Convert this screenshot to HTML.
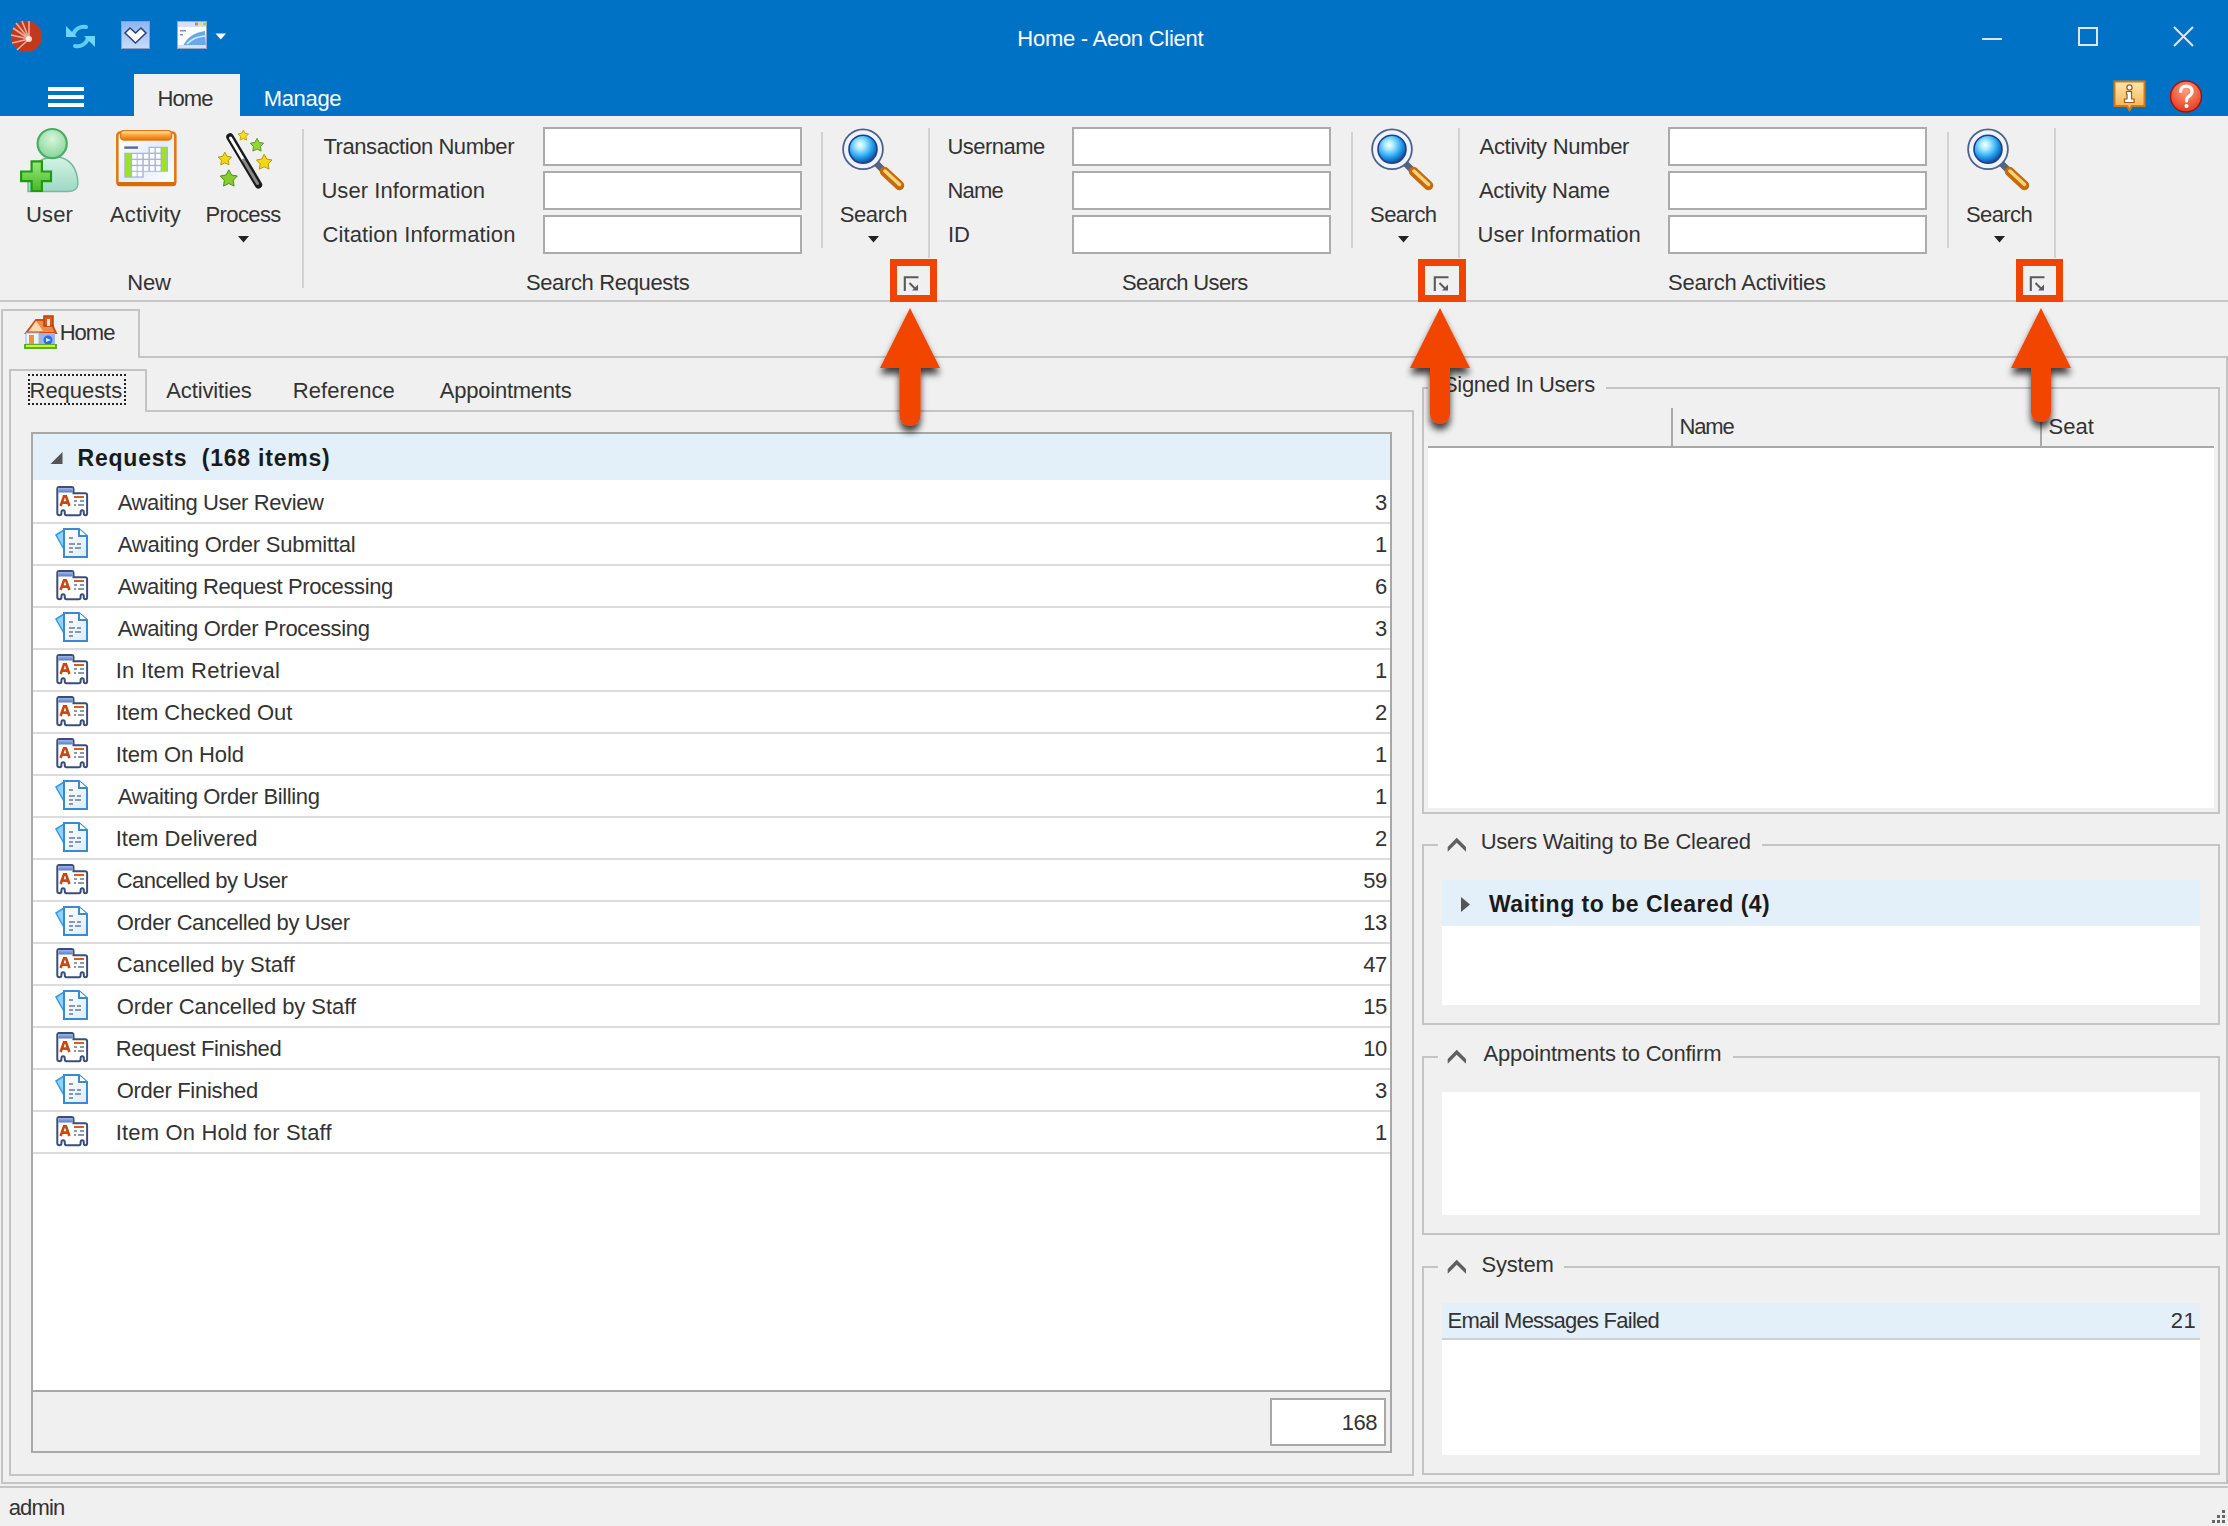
<!DOCTYPE html><html><head><meta charset="utf-8"><style>
html,body{margin:0;padding:0;}
body{width:2228px;height:1526px;position:relative;overflow:hidden;background:#f0f0f0;font-family:"Liberation Sans", sans-serif;}
.t{position:absolute;white-space:nowrap;line-height:26px;}
.r{position:absolute;}
</style></head><body>
<div class="r" style="left:0px;top:0px;width:2228px;height:116px;background:#0072c6;"></div>
<div class="t" style="left:1017.30px;top:26.0px;font-size:22px;color:#ffffff;font-weight:normal;letter-spacing:-0.259px;">Home - Aeon Client</div>
<svg class="r" style="left:10px;top:20px;" width="34" height="34" viewBox="0 0 34 34"><defs><radialGradient id="lg" cx="0.6" cy="0.55" r="0.6"><stop offset="0" stop-color="#f5a080"/><stop offset="1" stop-color="#c0381c"/></radialGradient></defs>
<circle cx="16.5" cy="16.5" r="15.5" fill="#c23a1e"/>
<g stroke="#f6c2b0" stroke-width="1.6" opacity="0.85">
<line x1="19" y1="19" x2="3" y2="8"/><line x1="19" y1="19" x2="6" y2="3"/><line x1="19" y1="19" x2="12" y2="1"/><line x1="19" y1="19" x2="19" y2="1"/><line x1="19" y1="19" x2="1" y2="15"/><line x1="19" y1="19" x2="2" y2="23"/><line x1="19" y1="19" x2="7" y2="30"/></g>
<circle cx="19" cy="19" r="3" fill="#ffffff" opacity="0.8"/></svg>
<svg class="r" style="left:64px;top:21px;" width="33" height="31" viewBox="0 0 33 31"><g fill="none" stroke="#5ecdf5" stroke-width="4" stroke-linecap="round">
<path d="M22 6 A11 11 0 0 0 9 14"/><path d="M11 25 A11 11 0 0 0 24 17"/></g>
<path d="M2 5 L2 16 L13 16 Z" fill="#6fd6f8"/><path d="M31 15 L31 26 L20 15 Z" fill="#6fd6f8"/></svg>
<svg class="r" style="left:121px;top:21px;" width="30" height="29" viewBox="0 0 30 29"><defs><linearGradient id="hb" x1="0" y1="0" x2="0" y2="1"><stop offset="0" stop-color="#8fb4f0"/><stop offset="1" stop-color="#c8dcfc"/></linearGradient></defs>
<rect x="0.5" y="0.5" width="28" height="27" fill="url(#hb)" stroke="#8aa0c8"/>
<path d="M4 12 L9 7 L14.5 12 L20 7 L25 12 L14.5 22 Z" fill="#ffffff" stroke="#28407a" stroke-width="1.5" stroke-linejoin="miter"/></svg>
<svg class="r" style="left:177px;top:21px;" width="31" height="29" viewBox="0 0 31 29"><rect x="0.5" y="0.5" width="29" height="27" fill="#ffffff" stroke="#9aa8c8"/>
<rect x="1" y="1" width="28" height="5" fill="#d8e0f4"/>
<rect x="18" y="1.5" width="3" height="3" fill="#f07070"/><rect x="22" y="1.5" width="3" height="3" fill="#f0e040"/><rect x="26" y="1.5" width="3" height="3" fill="#90e040"/>
<path d="M6 25 Q12 12 28 10 L29 25 Z" fill="#6aa8ec"/>
<path d="M10 23 Q16 16 28 15" stroke="#d8ecff" stroke-width="1.5" fill="none"/>
<rect x="3" y="9" width="6" height="1.5" fill="#8090b0"/><rect x="3" y="13" width="3" height="1.5" fill="#8090b0"/>
<rect x="1" y="24" width="28" height="3" fill="#d8e0f4"/></svg>
<svg class="r" style="left:215px;top:33px;" width="12" height="8" viewBox="0 0 12 8"><path d="M0.5 0.5 L11 0.5 L5.75 6.5 Z" fill="#ffffff"/></svg>
<div class="r" style="left:1982px;top:38px;width:20px;height:2px;background:#dfe6ee;"></div>
<div class="r" style="left:2078px;top:27px;width:16px;height:15px;border:2px solid #dfe6ee;background:transparent;"></div>
<svg class="r" style="left:2172px;top:25px;" width="24" height="23" viewBox="0 0 24 23"><path d="M2 2 L21 21 M21 2 L2 21" stroke="#dfe6ee" stroke-width="2"/></svg>
<div class="r" style="left:48px;top:87px;width:36px;height:4px;background:#ffffff;"></div>
<div class="r" style="left:48px;top:95px;width:36px;height:4px;background:#ffffff;"></div>
<div class="r" style="left:48px;top:103px;width:36px;height:4px;background:#ffffff;"></div>
<div class="r" style="left:134px;top:74px;width:106px;height:42px;background:#f0f0f0;"></div>
<div class="t" style="left:157.40px;top:86.0px;font-size:22px;color:#333333;font-weight:normal;letter-spacing:-0.9px;">Home</div>
<div class="t" style="left:263.70px;top:86.0px;font-size:22px;color:#ffffff;font-weight:normal;letter-spacing:-0.32px;">Manage</div>
<svg class="r" style="left:2113px;top:80px;" width="34" height="33" viewBox="0 0 34 33"><defs><linearGradient id="ig" x1="0" y1="0" x2="0" y2="1"><stop offset="0" stop-color="#ffe6b0"/><stop offset="1" stop-color="#f7b04a"/></linearGradient></defs>
<path d="M1.5 1.5 H31.5 V26 H19 L16.5 30 L14 26 H1.5 Z" fill="url(#ig)" stroke="#d27a16" stroke-width="2"/>
<circle cx="16.5" cy="7.5" r="2.6" fill="#fff" stroke="#9a5a18" stroke-width="1.2"/>
<path d="M13.5 11.5 H18.5 V19 H21 V22.5 H11.5 V19 H14 V14.5 H13.5 Z" fill="#fff" stroke="#9a5a18" stroke-width="1.2"/></svg>
<svg class="r" style="left:2169px;top:80px;" width="34" height="34" viewBox="0 0 34 34"><defs><radialGradient id="hg" cx="0.5" cy="0.3" r="0.7"><stop offset="0" stop-color="#ffa080"/><stop offset="1" stop-color="#e23a1a"/></radialGradient></defs>
<circle cx="17" cy="16.5" r="15.5" fill="url(#hg)" stroke="#a81010" stroke-width="1.5"/>
<path d="M11.5 11.5 Q12 6 17.5 6 Q23 6.5 23 11.5 Q23 14.5 19.5 16.5 Q17.5 18 17.5 21" fill="none" stroke="#fff" stroke-width="3.2" stroke-linecap="round"/>
<circle cx="17.5" cy="26" r="2" fill="#fff"/></svg>
<div class="r" style="left:0px;top:300px;width:2228px;height:2px;background:#c6c6c6;"></div>
<svg class="r" style="left:18px;top:126px;" width="62" height="68" viewBox="0 0 62 68"><defs><linearGradient id="ub" x1="0" y1="0" x2="0" y2="1"><stop offset="0" stop-color="#d4f4e4"/><stop offset="1" stop-color="#9ed8c4"/></linearGradient>
<radialGradient id="uh" cx="0.5" cy="0.35" r="0.65"><stop offset="0" stop-color="#d8f6dc"/><stop offset="1" stop-color="#86d49a"/></radialGradient>
<linearGradient id="up" x1="0" y1="0" x2="0" y2="1"><stop offset="0" stop-color="#98e878"/><stop offset="1" stop-color="#48b828"/></linearGradient></defs>
<path d="M10 65.5 Q8 32 38 30.5 Q59 33 60 58 Q59 65.5 50 65.5 Z" fill="url(#ub)" stroke="#78b8a4" stroke-width="1.5"/>
<circle cx="34.2" cy="17.6" r="14.6" fill="url(#uh)" stroke="#4aae62" stroke-width="2.2"/>
<path d="M13.6 35.4 H23.9 V45.5 H33 V55.2 H23.9 V65 H13.6 V55.2 H3.1 V45.5 H13.6 Z" fill="url(#up)" stroke="#1f9a14" stroke-width="2.2"/></svg>
<svg class="r" style="left:116px;top:130px;" width="61" height="57" viewBox="0 0 61 57"><defs><linearGradient id="cb" x1="0" y1="0" x2="1" y2="1"><stop offset="0" stop-color="#ffffff"/><stop offset="0.5" stop-color="#e4ecfc"/><stop offset="1" stop-color="#ffffff"/></linearGradient>
<linearGradient id="cbar" x1="0" y1="0" x2="0" y2="1"><stop offset="0" stop-color="#fff4e0"/><stop offset="0.4" stop-color="#ffb040"/><stop offset="1" stop-color="#e07010"/></linearGradient></defs>
<rect x="1.3" y="2.5" width="58" height="52.5" rx="3" fill="url(#cb)" stroke="#e07a12" stroke-width="2.6"/>
<rect x="1" y="52" width="59" height="4" rx="2" fill="#d86a08"/>
<rect x="4.5" y="0.5" width="51" height="9.5" rx="3.5" fill="url(#cbar)" stroke="#e07a12" stroke-width="1.5"/>
<path d="M8.3 22.7 H32.5 V16.7 H52 V41.7 H27.7 V47.8 H8.3 Z" fill="#a9b5d3"/>
<rect x="8.3" y="16.4" width="13.7" height="2.4" fill="#5a6a98"/>
<rect x="33.9" y="18.0" width="4.6" height="4.6" fill="#ffffff"/><rect x="39.9" y="18.0" width="4.6" height="4.6" fill="#ffffff"/><rect x="46.0" y="18.0" width="4.6" height="4.6" fill="#98ec00"/><rect x="10.0" y="24.0" width="4.6" height="4.6" fill="#98ec00"/><rect x="16.1" y="24.0" width="4.6" height="4.6" fill="#ffffff"/><rect x="21.7" y="24.0" width="4.6" height="4.6" fill="#ffffff"/><rect x="27.8" y="24.0" width="4.6" height="4.6" fill="#ffffff"/><rect x="33.9" y="24.0" width="4.6" height="4.6" fill="#ffffff"/><rect x="39.9" y="24.0" width="4.6" height="4.6" fill="#ffffff"/><rect x="46.0" y="24.0" width="4.6" height="4.6" fill="#98ec00"/><rect x="10.0" y="30.1" width="4.6" height="4.6" fill="#98ec00"/><rect x="16.1" y="30.1" width="4.6" height="4.6" fill="#ffffff"/><rect x="21.7" y="30.1" width="4.6" height="4.6" fill="#ffffff"/><rect x="27.8" y="30.1" width="4.6" height="4.6" fill="#ffffff"/><rect x="33.9" y="30.1" width="4.6" height="4.6" fill="#ffffff"/><rect x="39.9" y="30.1" width="4.6" height="4.6" fill="#ffffff"/><rect x="46.0" y="30.1" width="4.6" height="4.6" fill="#98ec00"/><rect x="10.0" y="36.2" width="4.6" height="4.6" fill="#98ec00"/><rect x="16.1" y="36.2" width="4.6" height="4.6" fill="#ffffff"/><rect x="21.7" y="36.2" width="4.6" height="4.6" fill="#ffffff"/><rect x="27.8" y="36.2" width="4.6" height="4.6" fill="#ffffff"/><rect x="33.9" y="36.2" width="4.6" height="4.6" fill="#ffffff"/><rect x="39.9" y="36.2" width="4.6" height="4.6" fill="#ffffff"/><rect x="46.0" y="36.2" width="4.6" height="4.6" fill="#98ec00"/><rect x="10.0" y="41.8" width="4.6" height="4.6" fill="#98ec00"/><rect x="16.1" y="41.8" width="4.6" height="4.6" fill="#ffffff"/><rect x="21.7" y="41.8" width="4.6" height="4.6" fill="#ffffff"/></svg>
<svg class="r" style="left:216px;top:126px;" width="60" height="68" viewBox="0 0 60 68"><polygon points="27.30,4.10 28.98,7.29 32.53,7.90 30.02,10.48 30.53,14.05 27.30,12.46 24.07,14.05 24.58,10.48 22.07,7.90 25.62,7.29" fill="#f4e020" stroke="#c8a800" stroke-width="1"/><polygon points="41.00,12.40 43.14,16.46 47.66,17.24 44.46,20.52 45.11,25.06 41.00,23.04 36.89,25.06 37.54,20.52 34.34,17.24 38.86,16.46" fill="#90d838" stroke="#5a9a20" stroke-width="1"/><polygon points="48.20,28.30 50.71,33.05 56.00,33.97 52.26,37.82 53.02,43.13 48.20,40.76 43.38,43.13 44.14,37.82 40.40,33.97 45.69,33.05" fill="#f0d818" stroke="#b89800" stroke-width="1"/><polygon points="8.90,26.20 11.04,30.26 15.56,31.04 12.36,34.32 13.01,38.86 8.90,36.84 4.79,38.86 5.44,34.32 2.24,31.04 6.76,30.26" fill="#f0d818" stroke="#b89800" stroke-width="1"/><polygon points="12.80,43.80 15.55,49.01 21.36,50.02 17.25,54.25 18.09,60.08 12.80,57.48 7.51,60.08 8.35,54.25 4.24,50.02 10.05,49.01" fill="#88cc30" stroke="#4a9018" stroke-width="1"/><path d="M14 11 L42.5 58.8" stroke="#1a1a1a" stroke-width="7.5" stroke-linecap="round"/><path d="M14.5 12 L27.5 34" stroke="#ffffff" stroke-width="3" stroke-linecap="round"/><path d="M27.5 34 L41.5 57.5" stroke="#888" stroke-width="3" stroke-linecap="round"/></svg>
<div class="t" style="left:26.00px;top:202.0px;font-size:22px;color:#333333;font-weight:normal;letter-spacing:0.167px;">User</div>
<div class="t" style="left:110.00px;top:202.0px;font-size:22px;color:#333333;font-weight:normal;letter-spacing:0.143px;">Activity</div>
<div class="t" style="left:205.50px;top:202.0px;font-size:22px;color:#333333;font-weight:normal;letter-spacing:-0.617px;">Process</div>
<svg class="r" style="left:238px;top:236px;" width="11" height="7" viewBox="0 0 11 7"><path d="M0 0 H11 L5.5 6.5 Z" fill="#222"/></svg>
<div class="t" style="left:127.30px;top:270.0px;font-size:22px;color:#333333;font-weight:normal;letter-spacing:-0.15px;">New</div>
<div class="r" style="left:302px;top:129px;width:2px;height:159px;background:#d2d2d2;"></div>
<div class="t" style="left:323.40px;top:134.0px;font-size:22px;color:#333333;font-weight:normal;letter-spacing:-0.435px;">Transaction Number</div>
<div class="t" style="left:321.40px;top:178.0px;font-size:22px;color:#333333;font-weight:normal;letter-spacing:0.073px;">User Information</div>
<div class="t" style="left:322.40px;top:222.0px;font-size:22px;color:#333333;font-weight:normal;letter-spacing:0.121px;">Citation Information</div>
<div class="r" style="left:543px;top:127px;width:255px;height:35px;border:2px solid #ababab;background:#ffffff;"></div>
<div class="r" style="left:543px;top:171px;width:255px;height:35px;border:2px solid #ababab;background:#ffffff;"></div>
<div class="r" style="left:543px;top:215px;width:255px;height:35px;border:2px solid #ababab;background:#ffffff;"></div>
<div class="r" style="left:821px;top:132px;width:2px;height:116px;background:#d2d2d2;"></div>
<svg class="r" style="left:842px;top:126px;" width="66" height="66" viewBox="0 0 66 66"><defs><radialGradient id="mg842" cx="0.4" cy="0.35" r="0.65"><stop offset="0" stop-color="#ffffff"/><stop offset="0.25" stop-color="#a8ecff"/><stop offset="0.7" stop-color="#1c9cec"/><stop offset="1" stop-color="#1a4a9a"/></radialGradient>
<linearGradient id="hd842" x1="0" y1="0" x2="1" y2="0"><stop offset="0" stop-color="#e07010"/><stop offset="0.6" stop-color="#ffe890"/><stop offset="1" stop-color="#e88a20"/></linearGradient></defs>
<line x1="34" y1="37" x2="44" y2="47" stroke="#56657e" stroke-width="6.5"/>
<line x1="42.5" y1="45.5" x2="57.5" y2="59.5" stroke="#c46a10" stroke-width="9.5" stroke-linecap="round"/>
<line x1="43" y1="45" x2="57.5" y2="58.5" stroke="#ffe080" stroke-width="3.5" stroke-linecap="round" opacity="0.9"/>
<circle cx="21" cy="23.2" r="19.9" fill="#eef3ff" stroke="#4e6088" stroke-width="1.8"/>
<circle cx="21" cy="23.2" r="14" fill="url(#mg842)" stroke="#1f3f8a" stroke-width="1.6"/></svg>
<div class="t" style="left:839.70px;top:202.0px;font-size:22px;color:#333333;font-weight:normal;letter-spacing:-0.4px;">Search</div>
<svg class="r" style="left:868px;top:236px;" width="11" height="7" viewBox="0 0 11 7"><path d="M0 0 H11 L5.5 6.5 Z" fill="#222"/></svg>
<div class="r" style="left:928px;top:128px;width:2px;height:130px;background:#d2d2d2;"></div>
<div class="t" style="left:525.90px;top:270.0px;font-size:22px;color:#333333;font-weight:normal;letter-spacing:-0.35px;">Search Requests</div>
<div class="r" style="left:890px;top:259px;width:33px;height:29px;border:7px solid #f04405;background:transparent;"></div>
<svg class="r" style="left:903px;top:275px;" width="17" height="17" viewBox="0 0 17 17"><path d="M1.8 16 V2.2 H15.5" fill="none" stroke="#5a5a5a" stroke-width="2.1"/><path d="M6.5 8 L12 13.5" fill="none" stroke="#5a5a5a" stroke-width="2"/><path d="M15 9.5 V15.5 H9 Z" fill="#5a5a5a"/></svg>
<div class="t" style="left:947.40px;top:134.0px;font-size:22px;color:#333333;font-weight:normal;letter-spacing:-0.529px;">Username</div>
<div class="t" style="left:947.60px;top:178.0px;font-size:22px;color:#333333;font-weight:normal;letter-spacing:-0.867px;">Name</div>
<div class="t" style="left:948.00px;top:222.0px;font-size:22px;color:#333333;font-weight:normal;letter-spacing:0px;">ID</div>
<div class="r" style="left:1072px;top:127px;width:255px;height:35px;border:2px solid #ababab;background:#ffffff;"></div>
<div class="r" style="left:1072px;top:171px;width:255px;height:35px;border:2px solid #ababab;background:#ffffff;"></div>
<div class="r" style="left:1072px;top:215px;width:255px;height:35px;border:2px solid #ababab;background:#ffffff;"></div>
<div class="r" style="left:1351px;top:132px;width:2px;height:116px;background:#d2d2d2;"></div>
<svg class="r" style="left:1371px;top:126px;" width="66" height="66" viewBox="0 0 66 66"><defs><radialGradient id="mg1371" cx="0.4" cy="0.35" r="0.65"><stop offset="0" stop-color="#ffffff"/><stop offset="0.25" stop-color="#a8ecff"/><stop offset="0.7" stop-color="#1c9cec"/><stop offset="1" stop-color="#1a4a9a"/></radialGradient>
<linearGradient id="hd1371" x1="0" y1="0" x2="1" y2="0"><stop offset="0" stop-color="#e07010"/><stop offset="0.6" stop-color="#ffe890"/><stop offset="1" stop-color="#e88a20"/></linearGradient></defs>
<line x1="34" y1="37" x2="44" y2="47" stroke="#56657e" stroke-width="6.5"/>
<line x1="42.5" y1="45.5" x2="57.5" y2="59.5" stroke="#c46a10" stroke-width="9.5" stroke-linecap="round"/>
<line x1="43" y1="45" x2="57.5" y2="58.5" stroke="#ffe080" stroke-width="3.5" stroke-linecap="round" opacity="0.9"/>
<circle cx="21" cy="23.2" r="19.9" fill="#eef3ff" stroke="#4e6088" stroke-width="1.8"/>
<circle cx="21" cy="23.2" r="14" fill="url(#mg1371)" stroke="#1f3f8a" stroke-width="1.6"/></svg>
<div class="t" style="left:1370.00px;top:202.0px;font-size:22px;color:#333333;font-weight:normal;letter-spacing:-0.52px;">Search</div>
<svg class="r" style="left:1398px;top:236px;" width="11" height="7" viewBox="0 0 11 7"><path d="M0 0 H11 L5.5 6.5 Z" fill="#222"/></svg>
<div class="r" style="left:1458px;top:128px;width:2px;height:130px;background:#d2d2d2;"></div>
<div class="t" style="left:1122.00px;top:270.0px;font-size:22px;color:#333333;font-weight:normal;letter-spacing:-0.636px;">Search Users</div>
<div class="r" style="left:1418px;top:259px;width:34px;height:29px;border:7px solid #f04405;background:transparent;"></div>
<svg class="r" style="left:1433px;top:275px;" width="17" height="17" viewBox="0 0 17 17"><path d="M1.8 16 V2.2 H15.5" fill="none" stroke="#5a5a5a" stroke-width="2.1"/><path d="M6.5 8 L12 13.5" fill="none" stroke="#5a5a5a" stroke-width="2"/><path d="M15 9.5 V15.5 H9 Z" fill="#5a5a5a"/></svg>
<div class="t" style="left:1479.50px;top:134.0px;font-size:22px;color:#333333;font-weight:normal;letter-spacing:-0.293px;">Activity Number</div>
<div class="t" style="left:1479.00px;top:178.0px;font-size:22px;color:#333333;font-weight:normal;letter-spacing:-0.3px;">Activity Name</div>
<div class="t" style="left:1477.50px;top:222.0px;font-size:22px;color:#333333;font-weight:normal;letter-spacing:0.047px;">User Information</div>
<div class="r" style="left:1668px;top:127px;width:255px;height:35px;border:2px solid #ababab;background:#ffffff;"></div>
<div class="r" style="left:1668px;top:171px;width:255px;height:35px;border:2px solid #ababab;background:#ffffff;"></div>
<div class="r" style="left:1668px;top:215px;width:255px;height:35px;border:2px solid #ababab;background:#ffffff;"></div>
<div class="r" style="left:1947px;top:132px;width:2px;height:116px;background:#d2d2d2;"></div>
<svg class="r" style="left:1967px;top:126px;" width="66" height="66" viewBox="0 0 66 66"><defs><radialGradient id="mg1967" cx="0.4" cy="0.35" r="0.65"><stop offset="0" stop-color="#ffffff"/><stop offset="0.25" stop-color="#a8ecff"/><stop offset="0.7" stop-color="#1c9cec"/><stop offset="1" stop-color="#1a4a9a"/></radialGradient>
<linearGradient id="hd1967" x1="0" y1="0" x2="1" y2="0"><stop offset="0" stop-color="#e07010"/><stop offset="0.6" stop-color="#ffe890"/><stop offset="1" stop-color="#e88a20"/></linearGradient></defs>
<line x1="34" y1="37" x2="44" y2="47" stroke="#56657e" stroke-width="6.5"/>
<line x1="42.5" y1="45.5" x2="57.5" y2="59.5" stroke="#c46a10" stroke-width="9.5" stroke-linecap="round"/>
<line x1="43" y1="45" x2="57.5" y2="58.5" stroke="#ffe080" stroke-width="3.5" stroke-linecap="round" opacity="0.9"/>
<circle cx="21" cy="23.2" r="19.9" fill="#eef3ff" stroke="#4e6088" stroke-width="1.8"/>
<circle cx="21" cy="23.2" r="14" fill="url(#mg1967)" stroke="#1f3f8a" stroke-width="1.6"/></svg>
<div class="t" style="left:1966.00px;top:202.0px;font-size:22px;color:#333333;font-weight:normal;letter-spacing:-0.6px;">Search</div>
<svg class="r" style="left:1994px;top:236px;" width="11" height="7" viewBox="0 0 11 7"><path d="M0 0 H11 L5.5 6.5 Z" fill="#222"/></svg>
<div class="r" style="left:2054px;top:128px;width:2px;height:130px;background:#d2d2d2;"></div>
<div class="t" style="left:1668.00px;top:270.0px;font-size:22px;color:#333333;font-weight:normal;letter-spacing:-0.206px;">Search Activities</div>
<div class="r" style="left:2016px;top:259px;width:33px;height:29px;border:7px solid #f04405;background:transparent;"></div>
<svg class="r" style="left:2029px;top:275px;" width="17" height="17" viewBox="0 0 17 17"><path d="M1.8 16 V2.2 H15.5" fill="none" stroke="#5a5a5a" stroke-width="2.1"/><path d="M6.5 8 L12 13.5" fill="none" stroke="#5a5a5a" stroke-width="2"/><path d="M15 9.5 V15.5 H9 Z" fill="#5a5a5a"/></svg>
<div class="r" style="left:1px;top:309px;width:2px;height:1175px;background:#c4c4c4;"></div>
<div class="r" style="left:1px;top:309px;width:139px;height:2px;background:#c4c4c4;"></div>
<div class="r" style="left:138px;top:309px;width:2px;height:49px;background:#c4c4c4;"></div>
<div class="r" style="left:138px;top:356px;width:2090px;height:2px;background:#c4c4c4;"></div>
<div class="r" style="left:2226px;top:356px;width:2px;height:1128px;background:#c4c4c4;"></div>
<div class="r" style="left:1px;top:1482px;width:2227px;height:2px;background:#c4c4c4;"></div>
<svg class="r" style="left:23px;top:315px;" width="35" height="35" viewBox="0 0 35 35"><path d="M3 18 L13 5 L27 5 L33 18 Z" fill="#f48a40" stroke="#c8501a" stroke-width="2"/>
<path d="M6 16 L13 6 L20 16" fill="#ffd8b0" stroke="none"/>
<rect x="21" y="1" width="9" height="10" fill="#d85a20" stroke="#b84010" stroke-width="1.5"/>
<rect x="24" y="4" width="3" height="7" fill="#ffe6cc"/>
<rect x="3" y="18" width="13" height="11" fill="#eaf4ff" stroke="#a8b8d8" stroke-width="1"/>
<rect x="16" y="18" width="16" height="11" fill="#9cb4e0"/>
<rect x="6" y="20" width="5" height="10" fill="#f0923c"/>
<circle cx="25" cy="25" r="4.5" fill="#2a6cf0"/><path d="M23 23 L28 25 L23 27 Z" fill="#e0f0ff"/>
<path d="M1 29 H34 V34 H1 Z" fill="#58b030"/><path d="M3 31 H32" stroke="#d0f030" stroke-width="2"/></svg>
<div class="t" style="left:59.70px;top:320.0px;font-size:22px;color:#333333;font-weight:normal;letter-spacing:-1.0px;">Home</div>
<div class="r" style="left:9px;top:369px;width:2px;height:1107px;background:#c4c4c4;"></div>
<div class="r" style="left:9px;top:369px;width:138px;height:2px;background:#c4c4c4;"></div>
<div class="r" style="left:145px;top:369px;width:2px;height:43px;background:#c4c4c4;"></div>
<div class="r" style="left:145px;top:410px;width:1269px;height:2px;background:#c4c4c4;"></div>
<div class="r" style="left:1412px;top:410px;width:2px;height:1066px;background:#c4c4c4;"></div>
<div class="r" style="left:9px;top:1474px;width:1405px;height:2px;background:#c4c4c4;"></div>
<div class="t" style="left:29.60px;top:378.0px;font-size:22px;color:#333333;font-weight:normal;letter-spacing:-0.057px;">Requests</div>
<div class="t" style="left:166.30px;top:378.0px;font-size:22px;color:#333333;font-weight:normal;letter-spacing:-0.144px;">Activities</div>
<div class="t" style="left:292.70px;top:378.0px;font-size:22px;color:#333333;font-weight:normal;letter-spacing:0.075px;">Reference</div>
<div class="t" style="left:439.80px;top:378.0px;font-size:22px;color:#333333;font-weight:normal;letter-spacing:-0.236px;">Appointments</div>
<div class="r" style="left:28px;top:374px;width:94px;height:27px;border:2px dotted #222;"></div>
<div class="r" style="left:31px;top:432px;width:1357px;height:1017px;border:2px solid #a8a8a8;background:#ffffff;"></div>
<div class="r" style="left:33px;top:434px;width:1357px;height:46px;background:#e3eff9;"></div>
<svg class="r" style="left:50px;top:451px;" width="13" height="14" viewBox="0 0 13 14"><path d="M12.5 1 V13 H0.5 Z" fill="#555"/></svg>
<div class="t" style="left:77.50px;top:445.1px;font-size:23px;color:#1a1a1a;font-weight:bold;letter-spacing:0.79px;">Requests&nbsp; (168 items)</div>
<div class="r" style="left:33px;top:522px;width:1357px;height:2px;background:#dcdcdc;"></div>
<svg class="r" style="left:55px;top:485px;" width="34" height="33" viewBox="0 0 34 33"><defs><linearGradient id="tabg" x1="0" y1="0" x2="0" y2="1"><stop offset="0" stop-color="#9cb8ec"/><stop offset="1" stop-color="#5a7ac0"/></linearGradient></defs>
<path d="M2.3 28.3 V4 Q2.3 2 4.3 2 H16.5 Q18.5 2 18.5 4 V8.3 H30.1 Q32.1 8.3 32.1 10.3 V28.3 Q32.1 30.3 30.6 30.3 Q28.8 30.3 28.8 28.6 V27.5 Q28.8 25.3 27.2 25.3 Q25.6 25.3 25.6 27.5 V28.6 Q25.6 30.3 24 30.3 H11.3 Q9.8 30.3 9.8 28.6 V27.5 Q9.8 25.3 8.1 25.3 Q6.4 25.3 6.4 27.5 V28.6 Q6.4 30.3 4.6 30.3 Q2.3 30.3 2.3 28.3 Z" fill="#ffffff" stroke="#3a4e78" stroke-width="2"/>
<rect x="3.3" y="3" width="14.2" height="4.5" fill="url(#tabg)"/>
<path d="M5.6 21 L9 11.2 L11 11.2 L14.4 21 M7.2 17.6 H12.8" fill="none" stroke="#c8480e" stroke-width="2.6"/>
<rect x="19" y="11" width="10" height="2" fill="#e05a1a"/>
<rect x="19" y="15" width="3" height="2" fill="#8898b0"/><rect x="25" y="15" width="4" height="2" fill="#8898b0"/>
<rect x="19" y="19" width="2" height="2" fill="#8898b0"/><rect x="23" y="19" width="6" height="2" fill="#8898b0"/></svg>
<div class="t" style="left:117.70px;top:490.0px;font-size:22px;color:#333333;font-weight:normal;letter-spacing:-0.389px;">Awaiting User Review</div>
<div class="t" style="right:841px;top:490.0px;font-size:22px;color:#333333;font-weight:normal;letter-spacing:-0.3px;">3</div>
<div class="r" style="left:33px;top:564px;width:1357px;height:2px;background:#dcdcdc;"></div>
<svg class="r" style="left:55px;top:527px;" width="34" height="33" viewBox="0 0 34 33"><defs><linearGradient id="pb" x1="0" y1="0" x2="1" y2="1"><stop offset="0" stop-color="#ffffff"/><stop offset="1" stop-color="#dcecfa"/></linearGradient></defs>
<path d="M1 8 L9 3 L11 26 Z" fill="#8fd4f8" stroke="#3a98e0" stroke-width="1.5"/>
<path d="M9 2 H24 L32 9 V30 H9 Z" fill="url(#pb)" stroke="#3b8ad0" stroke-width="2"/>
<path d="M24 2 V9 H32" fill="#ffffff" stroke="#3b8ad0" stroke-width="2"/>
<g fill="#8898b0"><rect x="14" y="10" width="4" height="2"/><rect x="14" y="16" width="6" height="2"/><rect x="22" y="16" width="4" height="2"/><rect x="14" y="20" width="4" height="2"/><rect x="20" y="20" width="6" height="2"/><rect x="14" y="24" width="4" height="2"/></g></svg>
<div class="t" style="left:117.70px;top:532.0px;font-size:22px;color:#333333;font-weight:normal;letter-spacing:-0.213px;">Awaiting Order Submittal</div>
<div class="t" style="right:841px;top:532.0px;font-size:22px;color:#333333;font-weight:normal;letter-spacing:-0.3px;">1</div>
<div class="r" style="left:33px;top:606px;width:1357px;height:2px;background:#dcdcdc;"></div>
<svg class="r" style="left:55px;top:569px;" width="34" height="33" viewBox="0 0 34 33"><defs><linearGradient id="tabg" x1="0" y1="0" x2="0" y2="1"><stop offset="0" stop-color="#9cb8ec"/><stop offset="1" stop-color="#5a7ac0"/></linearGradient></defs>
<path d="M2.3 28.3 V4 Q2.3 2 4.3 2 H16.5 Q18.5 2 18.5 4 V8.3 H30.1 Q32.1 8.3 32.1 10.3 V28.3 Q32.1 30.3 30.6 30.3 Q28.8 30.3 28.8 28.6 V27.5 Q28.8 25.3 27.2 25.3 Q25.6 25.3 25.6 27.5 V28.6 Q25.6 30.3 24 30.3 H11.3 Q9.8 30.3 9.8 28.6 V27.5 Q9.8 25.3 8.1 25.3 Q6.4 25.3 6.4 27.5 V28.6 Q6.4 30.3 4.6 30.3 Q2.3 30.3 2.3 28.3 Z" fill="#ffffff" stroke="#3a4e78" stroke-width="2"/>
<rect x="3.3" y="3" width="14.2" height="4.5" fill="url(#tabg)"/>
<path d="M5.6 21 L9 11.2 L11 11.2 L14.4 21 M7.2 17.6 H12.8" fill="none" stroke="#c8480e" stroke-width="2.6"/>
<rect x="19" y="11" width="10" height="2" fill="#e05a1a"/>
<rect x="19" y="15" width="3" height="2" fill="#8898b0"/><rect x="25" y="15" width="4" height="2" fill="#8898b0"/>
<rect x="19" y="19" width="2" height="2" fill="#8898b0"/><rect x="23" y="19" width="6" height="2" fill="#8898b0"/></svg>
<div class="t" style="left:117.70px;top:574.0px;font-size:22px;color:#333333;font-weight:normal;letter-spacing:-0.392px;">Awaiting Request Processing</div>
<div class="t" style="right:841px;top:574.0px;font-size:22px;color:#333333;font-weight:normal;letter-spacing:-0.3px;">6</div>
<div class="r" style="left:33px;top:648px;width:1357px;height:2px;background:#dcdcdc;"></div>
<svg class="r" style="left:55px;top:611px;" width="34" height="33" viewBox="0 0 34 33"><defs><linearGradient id="pb" x1="0" y1="0" x2="1" y2="1"><stop offset="0" stop-color="#ffffff"/><stop offset="1" stop-color="#dcecfa"/></linearGradient></defs>
<path d="M1 8 L9 3 L11 26 Z" fill="#8fd4f8" stroke="#3a98e0" stroke-width="1.5"/>
<path d="M9 2 H24 L32 9 V30 H9 Z" fill="url(#pb)" stroke="#3b8ad0" stroke-width="2"/>
<path d="M24 2 V9 H32" fill="#ffffff" stroke="#3b8ad0" stroke-width="2"/>
<g fill="#8898b0"><rect x="14" y="10" width="4" height="2"/><rect x="14" y="16" width="6" height="2"/><rect x="22" y="16" width="4" height="2"/><rect x="14" y="20" width="4" height="2"/><rect x="20" y="20" width="6" height="2"/><rect x="14" y="24" width="4" height="2"/></g></svg>
<div class="t" style="left:117.70px;top:616.0px;font-size:22px;color:#333333;font-weight:normal;letter-spacing:-0.325px;">Awaiting Order Processing</div>
<div class="t" style="right:841px;top:616.0px;font-size:22px;color:#333333;font-weight:normal;letter-spacing:-0.3px;">3</div>
<div class="r" style="left:33px;top:690px;width:1357px;height:2px;background:#dcdcdc;"></div>
<svg class="r" style="left:55px;top:653px;" width="34" height="33" viewBox="0 0 34 33"><defs><linearGradient id="tabg" x1="0" y1="0" x2="0" y2="1"><stop offset="0" stop-color="#9cb8ec"/><stop offset="1" stop-color="#5a7ac0"/></linearGradient></defs>
<path d="M2.3 28.3 V4 Q2.3 2 4.3 2 H16.5 Q18.5 2 18.5 4 V8.3 H30.1 Q32.1 8.3 32.1 10.3 V28.3 Q32.1 30.3 30.6 30.3 Q28.8 30.3 28.8 28.6 V27.5 Q28.8 25.3 27.2 25.3 Q25.6 25.3 25.6 27.5 V28.6 Q25.6 30.3 24 30.3 H11.3 Q9.8 30.3 9.8 28.6 V27.5 Q9.8 25.3 8.1 25.3 Q6.4 25.3 6.4 27.5 V28.6 Q6.4 30.3 4.6 30.3 Q2.3 30.3 2.3 28.3 Z" fill="#ffffff" stroke="#3a4e78" stroke-width="2"/>
<rect x="3.3" y="3" width="14.2" height="4.5" fill="url(#tabg)"/>
<path d="M5.6 21 L9 11.2 L11 11.2 L14.4 21 M7.2 17.6 H12.8" fill="none" stroke="#c8480e" stroke-width="2.6"/>
<rect x="19" y="11" width="10" height="2" fill="#e05a1a"/>
<rect x="19" y="15" width="3" height="2" fill="#8898b0"/><rect x="25" y="15" width="4" height="2" fill="#8898b0"/>
<rect x="19" y="19" width="2" height="2" fill="#8898b0"/><rect x="23" y="19" width="6" height="2" fill="#8898b0"/></svg>
<div class="t" style="left:115.70px;top:658.0px;font-size:22px;color:#333333;font-weight:normal;letter-spacing:0.25px;">In Item Retrieval</div>
<div class="t" style="right:841px;top:658.0px;font-size:22px;color:#333333;font-weight:normal;letter-spacing:-0.3px;">1</div>
<div class="r" style="left:33px;top:732px;width:1357px;height:2px;background:#dcdcdc;"></div>
<svg class="r" style="left:55px;top:695px;" width="34" height="33" viewBox="0 0 34 33"><defs><linearGradient id="tabg" x1="0" y1="0" x2="0" y2="1"><stop offset="0" stop-color="#9cb8ec"/><stop offset="1" stop-color="#5a7ac0"/></linearGradient></defs>
<path d="M2.3 28.3 V4 Q2.3 2 4.3 2 H16.5 Q18.5 2 18.5 4 V8.3 H30.1 Q32.1 8.3 32.1 10.3 V28.3 Q32.1 30.3 30.6 30.3 Q28.8 30.3 28.8 28.6 V27.5 Q28.8 25.3 27.2 25.3 Q25.6 25.3 25.6 27.5 V28.6 Q25.6 30.3 24 30.3 H11.3 Q9.8 30.3 9.8 28.6 V27.5 Q9.8 25.3 8.1 25.3 Q6.4 25.3 6.4 27.5 V28.6 Q6.4 30.3 4.6 30.3 Q2.3 30.3 2.3 28.3 Z" fill="#ffffff" stroke="#3a4e78" stroke-width="2"/>
<rect x="3.3" y="3" width="14.2" height="4.5" fill="url(#tabg)"/>
<path d="M5.6 21 L9 11.2 L11 11.2 L14.4 21 M7.2 17.6 H12.8" fill="none" stroke="#c8480e" stroke-width="2.6"/>
<rect x="19" y="11" width="10" height="2" fill="#e05a1a"/>
<rect x="19" y="15" width="3" height="2" fill="#8898b0"/><rect x="25" y="15" width="4" height="2" fill="#8898b0"/>
<rect x="19" y="19" width="2" height="2" fill="#8898b0"/><rect x="23" y="19" width="6" height="2" fill="#8898b0"/></svg>
<div class="t" style="left:115.70px;top:700.0px;font-size:22px;color:#333333;font-weight:normal;letter-spacing:-0.047px;">Item Checked Out</div>
<div class="t" style="right:841px;top:700.0px;font-size:22px;color:#333333;font-weight:normal;letter-spacing:-0.3px;">2</div>
<div class="r" style="left:33px;top:774px;width:1357px;height:2px;background:#dcdcdc;"></div>
<svg class="r" style="left:55px;top:737px;" width="34" height="33" viewBox="0 0 34 33"><defs><linearGradient id="tabg" x1="0" y1="0" x2="0" y2="1"><stop offset="0" stop-color="#9cb8ec"/><stop offset="1" stop-color="#5a7ac0"/></linearGradient></defs>
<path d="M2.3 28.3 V4 Q2.3 2 4.3 2 H16.5 Q18.5 2 18.5 4 V8.3 H30.1 Q32.1 8.3 32.1 10.3 V28.3 Q32.1 30.3 30.6 30.3 Q28.8 30.3 28.8 28.6 V27.5 Q28.8 25.3 27.2 25.3 Q25.6 25.3 25.6 27.5 V28.6 Q25.6 30.3 24 30.3 H11.3 Q9.8 30.3 9.8 28.6 V27.5 Q9.8 25.3 8.1 25.3 Q6.4 25.3 6.4 27.5 V28.6 Q6.4 30.3 4.6 30.3 Q2.3 30.3 2.3 28.3 Z" fill="#ffffff" stroke="#3a4e78" stroke-width="2"/>
<rect x="3.3" y="3" width="14.2" height="4.5" fill="url(#tabg)"/>
<path d="M5.6 21 L9 11.2 L11 11.2 L14.4 21 M7.2 17.6 H12.8" fill="none" stroke="#c8480e" stroke-width="2.6"/>
<rect x="19" y="11" width="10" height="2" fill="#e05a1a"/>
<rect x="19" y="15" width="3" height="2" fill="#8898b0"/><rect x="25" y="15" width="4" height="2" fill="#8898b0"/>
<rect x="19" y="19" width="2" height="2" fill="#8898b0"/><rect x="23" y="19" width="6" height="2" fill="#8898b0"/></svg>
<div class="t" style="left:115.70px;top:742.0px;font-size:22px;color:#333333;font-weight:normal;letter-spacing:-0.118px;">Item On Hold</div>
<div class="t" style="right:841px;top:742.0px;font-size:22px;color:#333333;font-weight:normal;letter-spacing:-0.3px;">1</div>
<div class="r" style="left:33px;top:816px;width:1357px;height:2px;background:#dcdcdc;"></div>
<svg class="r" style="left:55px;top:779px;" width="34" height="33" viewBox="0 0 34 33"><defs><linearGradient id="pb" x1="0" y1="0" x2="1" y2="1"><stop offset="0" stop-color="#ffffff"/><stop offset="1" stop-color="#dcecfa"/></linearGradient></defs>
<path d="M1 8 L9 3 L11 26 Z" fill="#8fd4f8" stroke="#3a98e0" stroke-width="1.5"/>
<path d="M9 2 H24 L32 9 V30 H9 Z" fill="url(#pb)" stroke="#3b8ad0" stroke-width="2"/>
<path d="M24 2 V9 H32" fill="#ffffff" stroke="#3b8ad0" stroke-width="2"/>
<g fill="#8898b0"><rect x="14" y="10" width="4" height="2"/><rect x="14" y="16" width="6" height="2"/><rect x="22" y="16" width="4" height="2"/><rect x="14" y="20" width="4" height="2"/><rect x="20" y="20" width="6" height="2"/><rect x="14" y="24" width="4" height="2"/></g></svg>
<div class="t" style="left:117.70px;top:784.0px;font-size:22px;color:#333333;font-weight:normal;letter-spacing:-0.367px;">Awaiting Order Billing</div>
<div class="t" style="right:841px;top:784.0px;font-size:22px;color:#333333;font-weight:normal;letter-spacing:-0.3px;">1</div>
<div class="r" style="left:33px;top:858px;width:1357px;height:2px;background:#dcdcdc;"></div>
<svg class="r" style="left:55px;top:821px;" width="34" height="33" viewBox="0 0 34 33"><defs><linearGradient id="pb" x1="0" y1="0" x2="1" y2="1"><stop offset="0" stop-color="#ffffff"/><stop offset="1" stop-color="#dcecfa"/></linearGradient></defs>
<path d="M1 8 L9 3 L11 26 Z" fill="#8fd4f8" stroke="#3a98e0" stroke-width="1.5"/>
<path d="M9 2 H24 L32 9 V30 H9 Z" fill="url(#pb)" stroke="#3b8ad0" stroke-width="2"/>
<path d="M24 2 V9 H32" fill="#ffffff" stroke="#3b8ad0" stroke-width="2"/>
<g fill="#8898b0"><rect x="14" y="10" width="4" height="2"/><rect x="14" y="16" width="6" height="2"/><rect x="22" y="16" width="4" height="2"/><rect x="14" y="20" width="4" height="2"/><rect x="20" y="20" width="6" height="2"/><rect x="14" y="24" width="4" height="2"/></g></svg>
<div class="t" style="left:115.70px;top:826.0px;font-size:22px;color:#333333;font-weight:normal;letter-spacing:-0.008px;">Item Delivered</div>
<div class="t" style="right:841px;top:826.0px;font-size:22px;color:#333333;font-weight:normal;letter-spacing:-0.3px;">2</div>
<div class="r" style="left:33px;top:900px;width:1357px;height:2px;background:#dcdcdc;"></div>
<svg class="r" style="left:55px;top:863px;" width="34" height="33" viewBox="0 0 34 33"><defs><linearGradient id="tabg" x1="0" y1="0" x2="0" y2="1"><stop offset="0" stop-color="#9cb8ec"/><stop offset="1" stop-color="#5a7ac0"/></linearGradient></defs>
<path d="M2.3 28.3 V4 Q2.3 2 4.3 2 H16.5 Q18.5 2 18.5 4 V8.3 H30.1 Q32.1 8.3 32.1 10.3 V28.3 Q32.1 30.3 30.6 30.3 Q28.8 30.3 28.8 28.6 V27.5 Q28.8 25.3 27.2 25.3 Q25.6 25.3 25.6 27.5 V28.6 Q25.6 30.3 24 30.3 H11.3 Q9.8 30.3 9.8 28.6 V27.5 Q9.8 25.3 8.1 25.3 Q6.4 25.3 6.4 27.5 V28.6 Q6.4 30.3 4.6 30.3 Q2.3 30.3 2.3 28.3 Z" fill="#ffffff" stroke="#3a4e78" stroke-width="2"/>
<rect x="3.3" y="3" width="14.2" height="4.5" fill="url(#tabg)"/>
<path d="M5.6 21 L9 11.2 L11 11.2 L14.4 21 M7.2 17.6 H12.8" fill="none" stroke="#c8480e" stroke-width="2.6"/>
<rect x="19" y="11" width="10" height="2" fill="#e05a1a"/>
<rect x="19" y="15" width="3" height="2" fill="#8898b0"/><rect x="25" y="15" width="4" height="2" fill="#8898b0"/>
<rect x="19" y="19" width="2" height="2" fill="#8898b0"/><rect x="23" y="19" width="6" height="2" fill="#8898b0"/></svg>
<div class="t" style="left:116.70px;top:868.0px;font-size:22px;color:#333333;font-weight:normal;letter-spacing:-0.537px;">Cancelled by User</div>
<div class="t" style="right:841px;top:868.0px;font-size:22px;color:#333333;font-weight:normal;letter-spacing:-0.3px;">59</div>
<div class="r" style="left:33px;top:942px;width:1357px;height:2px;background:#dcdcdc;"></div>
<svg class="r" style="left:55px;top:905px;" width="34" height="33" viewBox="0 0 34 33"><defs><linearGradient id="pb" x1="0" y1="0" x2="1" y2="1"><stop offset="0" stop-color="#ffffff"/><stop offset="1" stop-color="#dcecfa"/></linearGradient></defs>
<path d="M1 8 L9 3 L11 26 Z" fill="#8fd4f8" stroke="#3a98e0" stroke-width="1.5"/>
<path d="M9 2 H24 L32 9 V30 H9 Z" fill="url(#pb)" stroke="#3b8ad0" stroke-width="2"/>
<path d="M24 2 V9 H32" fill="#ffffff" stroke="#3b8ad0" stroke-width="2"/>
<g fill="#8898b0"><rect x="14" y="10" width="4" height="2"/><rect x="14" y="16" width="6" height="2"/><rect x="22" y="16" width="4" height="2"/><rect x="14" y="20" width="4" height="2"/><rect x="20" y="20" width="6" height="2"/><rect x="14" y="24" width="4" height="2"/></g></svg>
<div class="t" style="left:116.70px;top:910.0px;font-size:22px;color:#333333;font-weight:normal;letter-spacing:-0.4px;">Order Cancelled by User</div>
<div class="t" style="right:841px;top:910.0px;font-size:22px;color:#333333;font-weight:normal;letter-spacing:-0.3px;">13</div>
<div class="r" style="left:33px;top:984px;width:1357px;height:2px;background:#dcdcdc;"></div>
<svg class="r" style="left:55px;top:947px;" width="34" height="33" viewBox="0 0 34 33"><defs><linearGradient id="tabg" x1="0" y1="0" x2="0" y2="1"><stop offset="0" stop-color="#9cb8ec"/><stop offset="1" stop-color="#5a7ac0"/></linearGradient></defs>
<path d="M2.3 28.3 V4 Q2.3 2 4.3 2 H16.5 Q18.5 2 18.5 4 V8.3 H30.1 Q32.1 8.3 32.1 10.3 V28.3 Q32.1 30.3 30.6 30.3 Q28.8 30.3 28.8 28.6 V27.5 Q28.8 25.3 27.2 25.3 Q25.6 25.3 25.6 27.5 V28.6 Q25.6 30.3 24 30.3 H11.3 Q9.8 30.3 9.8 28.6 V27.5 Q9.8 25.3 8.1 25.3 Q6.4 25.3 6.4 27.5 V28.6 Q6.4 30.3 4.6 30.3 Q2.3 30.3 2.3 28.3 Z" fill="#ffffff" stroke="#3a4e78" stroke-width="2"/>
<rect x="3.3" y="3" width="14.2" height="4.5" fill="url(#tabg)"/>
<path d="M5.6 21 L9 11.2 L11 11.2 L14.4 21 M7.2 17.6 H12.8" fill="none" stroke="#c8480e" stroke-width="2.6"/>
<rect x="19" y="11" width="10" height="2" fill="#e05a1a"/>
<rect x="19" y="15" width="3" height="2" fill="#8898b0"/><rect x="25" y="15" width="4" height="2" fill="#8898b0"/>
<rect x="19" y="19" width="2" height="2" fill="#8898b0"/><rect x="23" y="19" width="6" height="2" fill="#8898b0"/></svg>
<div class="t" style="left:116.70px;top:952.0px;font-size:22px;color:#333333;font-weight:normal;letter-spacing:0.006px;">Cancelled by Staff</div>
<div class="t" style="right:841px;top:952.0px;font-size:22px;color:#333333;font-weight:normal;letter-spacing:-0.3px;">47</div>
<div class="r" style="left:33px;top:1026px;width:1357px;height:2px;background:#dcdcdc;"></div>
<svg class="r" style="left:55px;top:989px;" width="34" height="33" viewBox="0 0 34 33"><defs><linearGradient id="pb" x1="0" y1="0" x2="1" y2="1"><stop offset="0" stop-color="#ffffff"/><stop offset="1" stop-color="#dcecfa"/></linearGradient></defs>
<path d="M1 8 L9 3 L11 26 Z" fill="#8fd4f8" stroke="#3a98e0" stroke-width="1.5"/>
<path d="M9 2 H24 L32 9 V30 H9 Z" fill="url(#pb)" stroke="#3b8ad0" stroke-width="2"/>
<path d="M24 2 V9 H32" fill="#ffffff" stroke="#3b8ad0" stroke-width="2"/>
<g fill="#8898b0"><rect x="14" y="10" width="4" height="2"/><rect x="14" y="16" width="6" height="2"/><rect x="22" y="16" width="4" height="2"/><rect x="14" y="20" width="4" height="2"/><rect x="20" y="20" width="6" height="2"/><rect x="14" y="24" width="4" height="2"/></g></svg>
<div class="t" style="left:116.70px;top:994.0px;font-size:22px;color:#333333;font-weight:normal;letter-spacing:-0.052px;">Order Cancelled by Staff</div>
<div class="t" style="right:841px;top:994.0px;font-size:22px;color:#333333;font-weight:normal;letter-spacing:-0.3px;">15</div>
<div class="r" style="left:33px;top:1068px;width:1357px;height:2px;background:#dcdcdc;"></div>
<svg class="r" style="left:55px;top:1031px;" width="34" height="33" viewBox="0 0 34 33"><defs><linearGradient id="tabg" x1="0" y1="0" x2="0" y2="1"><stop offset="0" stop-color="#9cb8ec"/><stop offset="1" stop-color="#5a7ac0"/></linearGradient></defs>
<path d="M2.3 28.3 V4 Q2.3 2 4.3 2 H16.5 Q18.5 2 18.5 4 V8.3 H30.1 Q32.1 8.3 32.1 10.3 V28.3 Q32.1 30.3 30.6 30.3 Q28.8 30.3 28.8 28.6 V27.5 Q28.8 25.3 27.2 25.3 Q25.6 25.3 25.6 27.5 V28.6 Q25.6 30.3 24 30.3 H11.3 Q9.8 30.3 9.8 28.6 V27.5 Q9.8 25.3 8.1 25.3 Q6.4 25.3 6.4 27.5 V28.6 Q6.4 30.3 4.6 30.3 Q2.3 30.3 2.3 28.3 Z" fill="#ffffff" stroke="#3a4e78" stroke-width="2"/>
<rect x="3.3" y="3" width="14.2" height="4.5" fill="url(#tabg)"/>
<path d="M5.6 21 L9 11.2 L11 11.2 L14.4 21 M7.2 17.6 H12.8" fill="none" stroke="#c8480e" stroke-width="2.6"/>
<rect x="19" y="11" width="10" height="2" fill="#e05a1a"/>
<rect x="19" y="15" width="3" height="2" fill="#8898b0"/><rect x="25" y="15" width="4" height="2" fill="#8898b0"/>
<rect x="19" y="19" width="2" height="2" fill="#8898b0"/><rect x="23" y="19" width="6" height="2" fill="#8898b0"/></svg>
<div class="t" style="left:115.70px;top:1036.0px;font-size:22px;color:#333333;font-weight:normal;letter-spacing:-0.347px;">Request Finished</div>
<div class="t" style="right:841px;top:1036.0px;font-size:22px;color:#333333;font-weight:normal;letter-spacing:-0.3px;">10</div>
<div class="r" style="left:33px;top:1110px;width:1357px;height:2px;background:#dcdcdc;"></div>
<svg class="r" style="left:55px;top:1073px;" width="34" height="33" viewBox="0 0 34 33"><defs><linearGradient id="pb" x1="0" y1="0" x2="1" y2="1"><stop offset="0" stop-color="#ffffff"/><stop offset="1" stop-color="#dcecfa"/></linearGradient></defs>
<path d="M1 8 L9 3 L11 26 Z" fill="#8fd4f8" stroke="#3a98e0" stroke-width="1.5"/>
<path d="M9 2 H24 L32 9 V30 H9 Z" fill="url(#pb)" stroke="#3b8ad0" stroke-width="2"/>
<path d="M24 2 V9 H32" fill="#ffffff" stroke="#3b8ad0" stroke-width="2"/>
<g fill="#8898b0"><rect x="14" y="10" width="4" height="2"/><rect x="14" y="16" width="6" height="2"/><rect x="22" y="16" width="4" height="2"/><rect x="14" y="20" width="4" height="2"/><rect x="20" y="20" width="6" height="2"/><rect x="14" y="24" width="4" height="2"/></g></svg>
<div class="t" style="left:116.70px;top:1078.0px;font-size:22px;color:#333333;font-weight:normal;letter-spacing:-0.3px;">Order Finished</div>
<div class="t" style="right:841px;top:1078.0px;font-size:22px;color:#333333;font-weight:normal;letter-spacing:-0.3px;">3</div>
<div class="r" style="left:33px;top:1152px;width:1357px;height:2px;background:#dcdcdc;"></div>
<svg class="r" style="left:55px;top:1115px;" width="34" height="33" viewBox="0 0 34 33"><defs><linearGradient id="tabg" x1="0" y1="0" x2="0" y2="1"><stop offset="0" stop-color="#9cb8ec"/><stop offset="1" stop-color="#5a7ac0"/></linearGradient></defs>
<path d="M2.3 28.3 V4 Q2.3 2 4.3 2 H16.5 Q18.5 2 18.5 4 V8.3 H30.1 Q32.1 8.3 32.1 10.3 V28.3 Q32.1 30.3 30.6 30.3 Q28.8 30.3 28.8 28.6 V27.5 Q28.8 25.3 27.2 25.3 Q25.6 25.3 25.6 27.5 V28.6 Q25.6 30.3 24 30.3 H11.3 Q9.8 30.3 9.8 28.6 V27.5 Q9.8 25.3 8.1 25.3 Q6.4 25.3 6.4 27.5 V28.6 Q6.4 30.3 4.6 30.3 Q2.3 30.3 2.3 28.3 Z" fill="#ffffff" stroke="#3a4e78" stroke-width="2"/>
<rect x="3.3" y="3" width="14.2" height="4.5" fill="url(#tabg)"/>
<path d="M5.6 21 L9 11.2 L11 11.2 L14.4 21 M7.2 17.6 H12.8" fill="none" stroke="#c8480e" stroke-width="2.6"/>
<rect x="19" y="11" width="10" height="2" fill="#e05a1a"/>
<rect x="19" y="15" width="3" height="2" fill="#8898b0"/><rect x="25" y="15" width="4" height="2" fill="#8898b0"/>
<rect x="19" y="19" width="2" height="2" fill="#8898b0"/><rect x="23" y="19" width="6" height="2" fill="#8898b0"/></svg>
<div class="t" style="left:115.70px;top:1120.0px;font-size:22px;color:#333333;font-weight:normal;letter-spacing:0.167px;">Item On Hold for Staff</div>
<div class="t" style="right:841px;top:1120.0px;font-size:22px;color:#333333;font-weight:normal;letter-spacing:-0.3px;">1</div>
<div class="r" style="left:33px;top:1390px;width:1357px;height:2px;background:#a8a8a8;"></div>
<div class="r" style="left:33px;top:1392px;width:1357px;height:59px;background:#f0f0f0;"></div>
<div class="r" style="left:1270px;top:1398px;width:112px;height:44px;border:2px solid #a8a8a8;background:#ffffff;"></div>
<div class="t" style="left:1341.70px;top:1410.0px;font-size:22px;color:#333333;font-weight:normal;letter-spacing:-0.4px;">168</div>
<div class="r" style="left:1422px;top:387px;width:2px;height:427px;background:#c4c4c4;"></div>
<div class="r" style="left:2218px;top:387px;width:2px;height:427px;background:#c4c4c4;"></div>
<div class="r" style="left:1422px;top:812px;width:798px;height:2px;background:#c4c4c4;"></div>
<div class="r" style="left:1422px;top:387px;width:6px;height:2px;background:#c4c4c4;"></div>
<div class="r" style="left:1606px;top:387px;width:614px;height:2px;background:#c4c4c4;"></div>
<div class="t" style="left:1443.00px;top:372.0px;font-size:22px;color:#333333;font-weight:normal;letter-spacing:-0.314px;">Signed In Users</div>
<div class="r" style="left:1428px;top:446px;width:786px;height:2px;background:#a8a8a8;"></div>
<div class="r" style="left:1671px;top:408px;width:2px;height:38px;background:#a8a8a8;"></div>
<div class="r" style="left:2040px;top:408px;width:2px;height:38px;background:#a8a8a8;"></div>
<div class="t" style="left:1679.50px;top:414.0px;font-size:22px;color:#333333;font-weight:normal;letter-spacing:-1.167px;">Name</div>
<div class="t" style="left:2048.60px;top:414.0px;font-size:22px;color:#333333;font-weight:normal;letter-spacing:0.0px;">Seat</div>
<div class="r" style="left:1428px;top:448px;width:786px;height:360px;background:#ffffff;"></div>
<div class="r" style="left:1422px;top:844px;width:2px;height:181px;background:#c4c4c4;"></div>
<div class="r" style="left:2218px;top:844px;width:2px;height:181px;background:#c4c4c4;"></div>
<div class="r" style="left:1422px;top:1023px;width:798px;height:2px;background:#c4c4c4;"></div>
<div class="r" style="left:1422px;top:844px;width:16px;height:2px;background:#c4c4c4;"></div>
<div class="r" style="left:1762px;top:844px;width:458px;height:2px;background:#c4c4c4;"></div>
<svg class="r" style="left:1447px;top:836px;" width="20" height="17" viewBox="0 0 20 17"><path d="M0.7 11 L9.7 1.8 L19 11 L19 15.8 L9.7 6.8 L0.7 15.8 Z" fill="#606060"/></svg>
<div class="t" style="left:1480.70px;top:829.0px;font-size:22px;color:#333333;font-weight:normal;letter-spacing:-0.25px;">Users Waiting to Be Cleared</div>
<div class="r" style="left:1442px;top:880px;width:758px;height:46px;background:#e3eff9;"></div>
<div class="r" style="left:1442px;top:926px;width:758px;height:79px;background:#ffffff;"></div>
<svg class="r" style="left:1460px;top:896px;" width="11" height="17" viewBox="0 0 11 17"><path d="M1 1 L10 8.5 L1 16 Z" fill="#555"/></svg>
<div class="t" style="left:1489.00px;top:891.1px;font-size:23px;color:#1a1a1a;font-weight:bold;letter-spacing:0.5px;">Waiting to be Cleared (4)</div>
<div class="r" style="left:1422px;top:1056px;width:2px;height:179px;background:#c4c4c4;"></div>
<div class="r" style="left:2218px;top:1056px;width:2px;height:179px;background:#c4c4c4;"></div>
<div class="r" style="left:1422px;top:1233px;width:798px;height:2px;background:#c4c4c4;"></div>
<div class="r" style="left:1422px;top:1056px;width:16px;height:2px;background:#c4c4c4;"></div>
<div class="r" style="left:1733px;top:1056px;width:487px;height:2px;background:#c4c4c4;"></div>
<svg class="r" style="left:1447px;top:1048px;" width="20" height="17" viewBox="0 0 20 17"><path d="M0.7 11 L9.7 1.8 L19 11 L19 15.8 L9.7 6.8 L0.7 15.8 Z" fill="#606060"/></svg>
<div class="t" style="left:1483.60px;top:1041.0px;font-size:22px;color:#333333;font-weight:normal;letter-spacing:-0.191px;">Appointments to Confirm</div>
<div class="r" style="left:1442px;top:1092px;width:758px;height:123px;background:#ffffff;"></div>
<div class="r" style="left:1422px;top:1266px;width:2px;height:209px;background:#c4c4c4;"></div>
<div class="r" style="left:2218px;top:1266px;width:2px;height:209px;background:#c4c4c4;"></div>
<div class="r" style="left:1422px;top:1473px;width:798px;height:2px;background:#c4c4c4;"></div>
<div class="r" style="left:1422px;top:1266px;width:16px;height:2px;background:#c4c4c4;"></div>
<div class="r" style="left:1564px;top:1266px;width:656px;height:2px;background:#c4c4c4;"></div>
<svg class="r" style="left:1447px;top:1258px;" width="20" height="17" viewBox="0 0 20 17"><path d="M0.7 11 L9.7 1.8 L19 11 L19 15.8 L9.7 6.8 L0.7 15.8 Z" fill="#606060"/></svg>
<div class="t" style="left:1481.50px;top:1252.0px;font-size:22px;color:#333333;font-weight:normal;letter-spacing:-0.22px;">System</div>
<div class="r" style="left:1442px;top:1303px;width:758px;height:35px;background:#e3eff9;"></div>
<div class="r" style="left:1442px;top:1338px;width:758px;height:2px;background:#d0d0d0;"></div>
<div class="r" style="left:1442px;top:1340px;width:758px;height:115px;background:#ffffff;"></div>
<div class="t" style="left:1447.50px;top:1308.0px;font-size:22px;color:#333333;font-weight:normal;letter-spacing:-0.76px;">Email Messages Failed</div>
<div class="t" style="left:2170.80px;top:1308.0px;font-size:22px;color:#333333;font-weight:normal;letter-spacing:0.4px;">21</div>
<div class="r" style="left:0px;top:1486px;width:2228px;height:2px;background:#c4c4c4;"></div>
<div class="t" style="left:8.70px;top:1495.0px;font-size:22px;color:#333333;font-weight:normal;letter-spacing:-0.825px;">admin</div>
<svg class="r" style="left:2208px;top:1508px;" width="20" height="18" viewBox="0 0 20 18"><g fill="#666"><rect x="14" y="2" width="3" height="3"/><rect x="9" y="7" width="3" height="3"/><rect x="14" y="7" width="3" height="3"/><rect x="4" y="12" width="3" height="3"/><rect x="9" y="12" width="3" height="3"/><rect x="14" y="12" width="3" height="3"/></g></svg>
<svg class="r" style="left:860.0px;top:298px;overflow:visible" width="100" height="158"><defs><filter id="sh910" x="-50%" y="-50%" width="200%" height="200%"><feGaussianBlur in="SourceAlpha" stdDeviation="3.5"/><feOffset dx="0" dy="6" result="b"/><feComponentTransfer><feFuncA type="linear" slope="0.75"/></feComponentTransfer><feMerge><feMergeNode/><feMergeNode in="SourceGraphic"/></feMerge></filter></defs><path d="M50.0 10 L80.0 70 L60.5 70 L60.5 117.5 A10.5 10.5 0 0 1 39.5 117.5 L39.5 70 L20.0 70 Z" fill="#f24405" filter="url(#sh910)"/></svg>
<svg class="r" style="left:1390.0px;top:298px;overflow:visible" width="100" height="156"><defs><filter id="sh1440" x="-50%" y="-50%" width="200%" height="200%"><feGaussianBlur in="SourceAlpha" stdDeviation="3.5"/><feOffset dx="0" dy="6" result="b"/><feComponentTransfer><feFuncA type="linear" slope="0.75"/></feComponentTransfer><feMerge><feMergeNode/><feMergeNode in="SourceGraphic"/></feMerge></filter></defs><path d="M50.0 10 L80.0 70 L60.0 70 L60.0 116.0 A10.0 10.0 0 0 1 40.0 116.0 L40.0 70 L20.0 70 Z" fill="#f24405" filter="url(#sh1440)"/></svg>
<svg class="r" style="left:1991.0px;top:298px;overflow:visible" width="100" height="154"><defs><filter id="sh2041" x="-50%" y="-50%" width="200%" height="200%"><feGaussianBlur in="SourceAlpha" stdDeviation="3.5"/><feOffset dx="0" dy="6" result="b"/><feComponentTransfer><feFuncA type="linear" slope="0.75"/></feComponentTransfer><feMerge><feMergeNode/><feMergeNode in="SourceGraphic"/></feMerge></filter></defs><path d="M50.0 10 L80.0 70 L60.0 70 L60.0 114.0 A10.0 10.0 0 0 1 40.0 114.0 L40.0 70 L20.0 70 Z" fill="#f24405" filter="url(#sh2041)"/></svg>
</body></html>
